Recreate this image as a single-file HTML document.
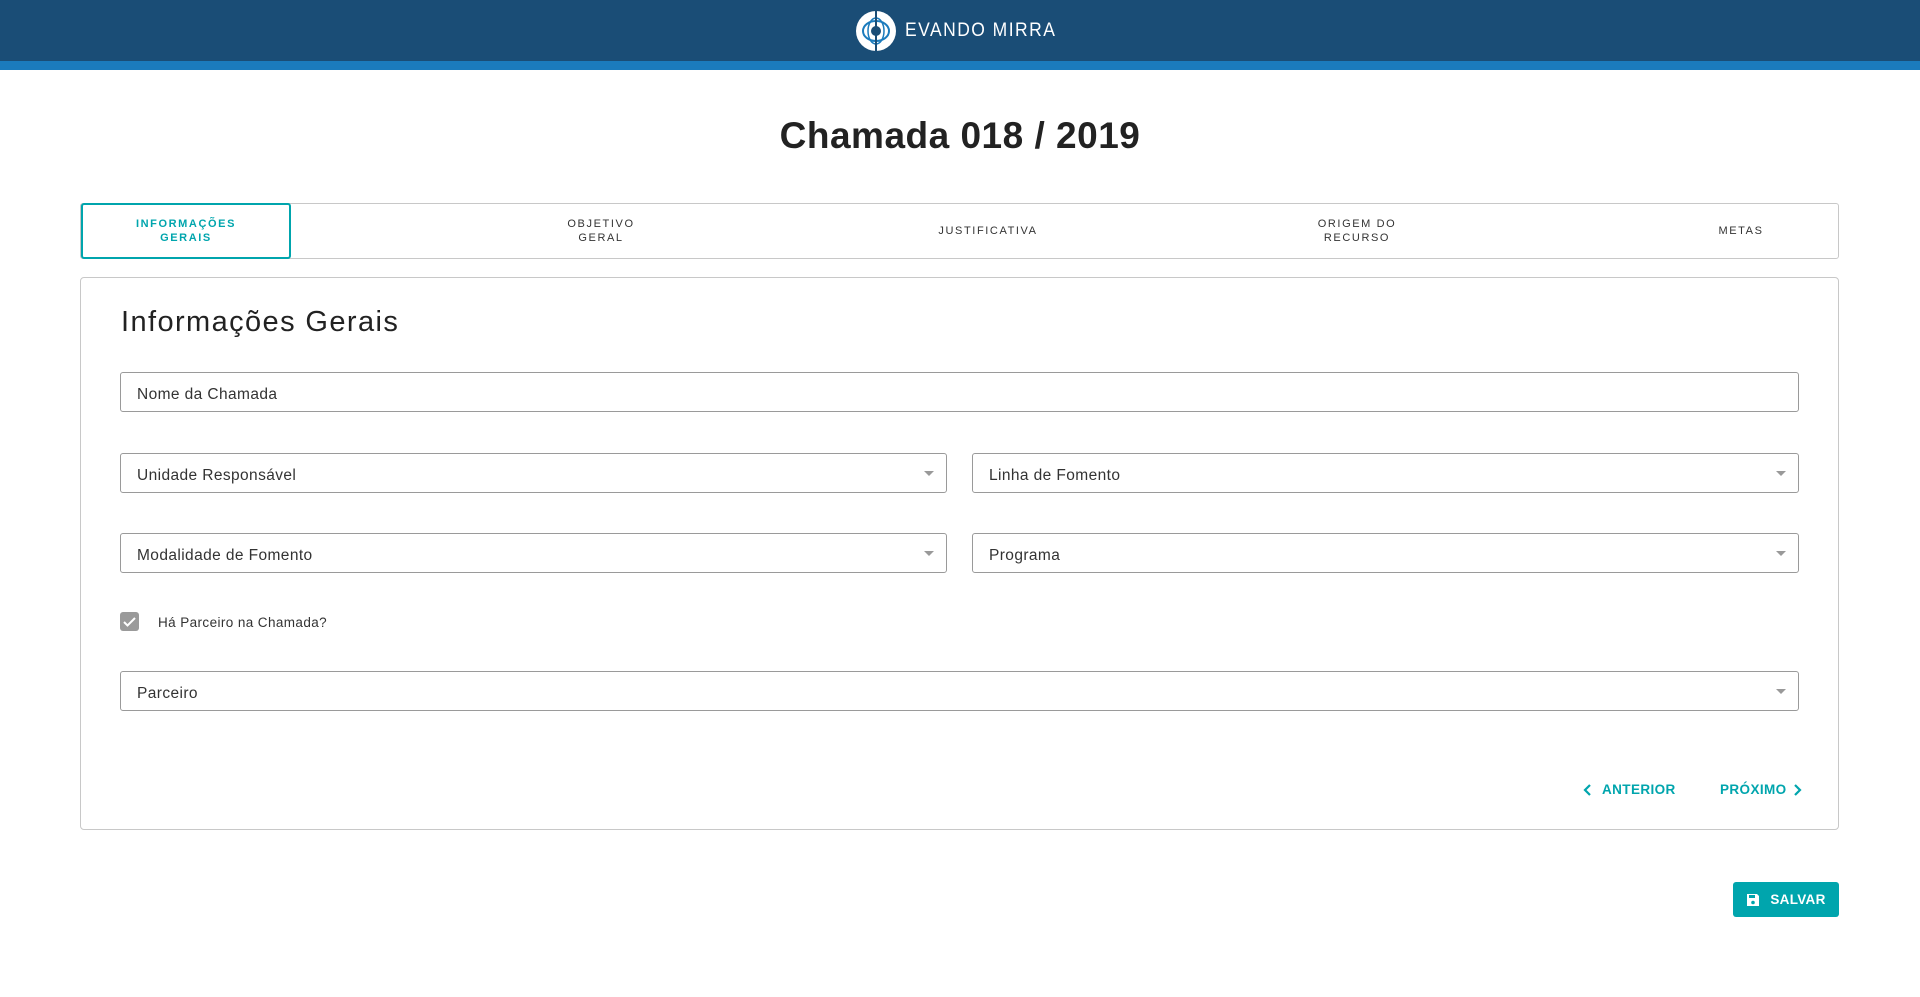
<!DOCTYPE html>
<html><head><meta charset="utf-8"><style>
*{box-sizing:border-box;margin:0;padding:0}
body{width:1920px;height:997px;background:#fff;font-family:"Liberation Sans",sans-serif;color:#222;position:relative;overflow:hidden}
.hd{position:absolute;left:0;top:0;width:1920px;height:61px;background:#1a4d76}
.st{position:absolute;left:0;top:61px;width:1920px;height:9px;background:#1b7bbd}
.logo{position:absolute;left:855px;top:10px;display:flex;align-items:center}
.logo span{color:#fff;font-size:19px;letter-spacing:1.6px;margin-left:8px;transform:scaleX(.92);transform-origin:left}
h1{position:absolute;top:115px;width:1920px;text-align:center;font-size:37px;font-weight:bold;color:#222;letter-spacing:.5px}
.tabs{position:absolute;left:80px;top:203px;width:1759px;height:56px;border:1px solid #c8c8c8;border-radius:3px}
.tab{position:absolute;top:0;height:54px;display:flex;align-items:center;justify-content:center;text-align:center;font-size:11px;letter-spacing:1.6px;color:#333;line-height:14px;transform:translateX(-50%)}
.act{left:0!important;transform:none;width:210px;top:-1px;height:56px;border:2px solid #00a5ad;border-radius:3px;color:#00a5ad;font-weight:bold}
.card{position:absolute;left:80px;top:277px;width:1759px;height:553px;border:1px solid #c8c8c8;border-radius:4px}
h2{position:absolute;left:121px;top:306px;font-size:29px;font-weight:normal;color:#222;letter-spacing:1.4px}
.in{position:absolute;height:40px;border:1px solid #9a9a9a;border-radius:3px;font-size:15.5px;color:#333;padding-left:16px;padding-top:3px;line-height:38px;letter-spacing:.4px}
.in.s::after{content:"";position:absolute;right:12px;top:17px;border-left:5px solid transparent;border-right:5px solid transparent;border-top:5px solid #999}
.cb{position:absolute;left:120px;top:612px;width:19px;height:19px;background:#9a9a9a;border-radius:3px}
.cl{position:absolute;left:158px;top:615px;font-size:13.5px;color:#333;letter-spacing:.4px}
.nav{position:absolute;top:782px;font-size:13.5px;font-weight:bold;color:#00a5ad;letter-spacing:.4px;display:flex;align-items:center}
.btn{position:absolute;left:1733px;top:882px;width:106px;height:35px;background:#00a5ad;border-radius:3px;color:#fff;font-weight:bold;font-size:13.5px;display:flex;align-items:center;justify-content:center;letter-spacing:.3px}
</style></head><body>
<div class="hd"></div><div class="st"></div>
<div class="logo"><svg width="42" height="42" viewBox="0 0 42 42"><circle cx="21" cy="21" r="20" fill="#fff"/><ellipse cx="21" cy="21" rx="13" ry="10" fill="none" stroke="#1b7bbd" stroke-width="2"/><ellipse cx="21" cy="21" rx="8" ry="13" fill="none" stroke="#1b7bbd" stroke-width="1.5"/><circle cx="21" cy="21" r="5" fill="#1a4d76"/><rect x="20" y="0" width="2" height="42" fill="#1a4d76"/></svg><span>EVANDO MIRRA</span></div>
<h1>Chamada 018 / 2019</h1>
<div class="tabs">
<div class="tab act">INFORMAÇÕES<br>GERAIS</div>
<div class="tab" style="left:520px">OBJETIVO<br>GERAL</div>
<div class="tab" style="left:907px">JUSTIFICATIVA</div>
<div class="tab" style="left:1276px">ORIGEM DO<br>RECURSO</div>
<div class="tab" style="left:1660px">METAS</div>
</div>
<div class="card"></div>
<h2>Informações Gerais</h2>
<div class="in" style="left:120px;top:372px;width:1679px">Nome da Chamada</div>
<div class="in s" style="left:120px;top:453px;width:827px">Unidade Responsável</div>
<div class="in s" style="left:972px;top:453px;width:827px">Linha de Fomento</div>
<div class="in s" style="left:120px;top:533px;width:827px">Modalidade de Fomento</div>
<div class="in s" style="left:972px;top:533px;width:827px">Programa</div>
<div class="cb"><svg width="19" height="19" viewBox="0 0 19 19"><path d="M4 10l3.5 3.5L15 6" fill="none" stroke="#fff" stroke-width="2"/></svg></div>
<div class="cl">Há Parceiro na Chamada?</div>
<div class="in s" style="left:120px;top:671px;width:1679px">Parceiro</div>
<div class="nav" style="left:1582px"><svg width="12" height="14" viewBox="0 0 12 14"><path d="M8 2L3 7l5 5" fill="none" stroke="#00a5ad" stroke-width="2.2"/></svg><span style="margin-left:8px">ANTERIOR</span></div>
<div class="nav" style="left:1720px"><span>PRÓXIMO</span><svg width="12" height="14" viewBox="0 0 12 14" style="margin-left:4px"><path d="M4 2l5 5-5 5" fill="none" stroke="#00a5ad" stroke-width="2.2"/></svg></div>
<div class="btn"><svg width="14" height="14" viewBox="0 0 14 14" style="margin-right:10px"><path d="M1 1h10l2 2v10H1z" fill="#fff"/><rect x="3" y="2" width="6" height="3" fill="#00a5ad"/><circle cx="7" cy="9.5" r="1.8" fill="#00a5ad"/></svg>SALVAR</div>
</body></html>
